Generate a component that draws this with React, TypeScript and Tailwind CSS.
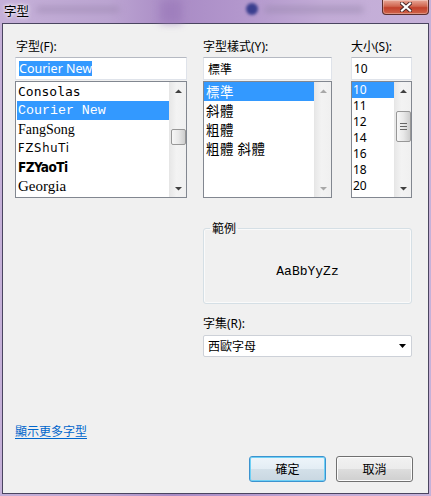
import React from "react";

function Arrow({ dir, color }: { dir: "up" | "down"; color: string }) {
  return (
    <svg width="7" height="4" viewBox="0 0 7 4">
      <path d={dir === "up" ? "M0 4L3.5 0.5L7 4Z" : "M0 0L7 0L3.5 3.5Z"} fill={color} />
    </svg>
  );
}

function ScrollBar({
  thumbClass,
  grip,
  arrowColor,
}: {
  thumbClass?: string;
  grip?: boolean;
  arrowColor: string;
}) {
  return (
    <div className="w-[17px] flex flex-col bg-[linear-gradient(to_right,#e8e8e8,#f3f3f3_40%,#f0f0f0)] border-l border-[#e6e6e6]">
      <div className="h-[17px] flex items-center justify-center">
        <Arrow dir="up" color={arrowColor} />
      </div>
      <div className="flex-1 px-[1px]">
        {thumbClass && (
          <div
            className={
              "w-[15px] rounded-[2px] border border-[#979797] bg-[linear-gradient(to_right,#f7f7f7,#e8e8e8_50%,#cdcdcd)] flex flex-col items-center justify-center gap-[2px] " +
              thumbClass
            }
          >
            {grip && (
              <>
                <div className="w-[7px] h-[1px] bg-[#666]" />
                <div className="w-[7px] h-[1px] bg-[#666]" />
                <div className="w-[7px] h-[1px] bg-[#666]" />
              </>
            )}
          </div>
        )}
      </div>
      <div className="h-[17px] flex items-center justify-center">
        <Arrow dir="down" color={arrowColor} />
      </div>
    </div>
  );
}

const fonts: { name: string; cls: string }[] = [
  { name: "Consolas", cls: "font-['DejaVu_Sans_Mono',monospace] text-[13px]" },
  { name: "Courier New", cls: "font-['Liberation_Mono',monospace] text-[13.3px]" },
  { name: "FangSong", cls: "font-['Liberation_Serif',serif] text-[14px]" },
  { name: "FZShuTi", cls: "font-['DejaVu_Sans',sans-serif] text-[11.5px] tracking-[0.8px]" },
  { name: "FZYaoTi", cls: "font-['DejaVu_Sans_Condensed','DejaVu_Sans',sans-serif] font-bold text-[13.5px] tracking-[-0.6px]" },
  { name: "Georgia", cls: "font-['Liberation_Serif',serif] text-[15px]" },
];

const styles = ["標準", "斜體", "粗體", "粗體 斜體"];
const sizes = ["10", "11", "12", "14", "16", "18", "20"];

const tb =
  "h-[23px] bg-white border border-[#dfe3ea] border-t-[#b5b9c2] flex items-center";

export default function App() {
  return (
    <div className="w-[431px] h-[496px] relative overflow-hidden bg-[linear-gradient(to_right,#c5b0d8,#bca5d2_25%,#a98bc5_40%,#b296cc_55%,#c3acd7_75%,#c6b1d9)] flex flex-col px-[2px] pb-[2px] font-['Noto_Sans','Noto_Sans_CJK_TC',sans-serif] text-[12px] text-black">
      {/* title bar */}
      <div className="h-[23px] relative flex items-start">
        <div className="absolute left-[34px] top-[6px] w-[84px] h-[7px] rounded bg-[#9a86ae] blur-[3px] opacity-50" />
        <div className="absolute left-[158px] top-0 w-[22px] h-[23px] bg-[#9b7aba] blur-[4px] opacity-70" />
        <div className="absolute left-[244px] top-[3px] w-[12px] h-[12px] rounded-full bg-[#3a3e8e] blur-[1.5px]" />
        <div className="absolute left-[262px] top-[6px] w-[100px] h-[7px] rounded bg-[#9585aa] blur-[3px] opacity-50" />
        <div className="relative pl-[2px] pt-[3px] leading-[16px] text-[12.5px] font-['Noto_Sans_CJK_TC',sans-serif] [text-shadow:0_0_5px_#fff,0_0_3px_#fff]">
          字型
        </div>
        <div className="relative ml-auto w-[47px] h-[15px] rounded-b-[4px] border border-t-0 border-[#5b2f2f] bg-[linear-gradient(#e9a898,#d06650_45%,#c2402b_55%,#d0654c)] shadow-[inset_0_0_0_1px_rgba(255,255,255,0.3)] flex items-center justify-center">
          <svg width="12" height="10" viewBox="0 0 12 10">
            <path d="M2 1.5L10 8.5M10 1.5L2 8.5" stroke="#4a2828" strokeWidth="4" strokeLinecap="square" />
            <path d="M2 1.5L10 8.5M10 1.5L2 8.5" stroke="#ffffff" strokeWidth="2.2" strokeLinecap="square" />
          </svg>
        </div>
      </div>

      {/* client */}
      <div className="flex-1 border border-[#4a4560] bg-[#f0f0f0] flex flex-col pl-[12px] pr-[15px] pt-[15px]">
        <div className="flex">
          {/* font column */}
          <div className="w-[172px] flex flex-col">
            <div className="h-[16px] leading-[16px] mb-[2px] pl-[1px]">字型(F):</div>
            <div className={tb + " pl-[3px]"}>
              <span className="bg-[#3399ff] text-white leading-[15px] text-[12.5px]">Courier New</span>
            </div>
            <div className="mt-[1px] h-[117px] border border-[#828790] bg-white flex">
              <div className="flex-1 pt-0 pl-[1px]">
                {fonts.map((f, i) => (
                  <div
                    key={f.name}
                    className={
                      "h-[19px] flex items-center pl-[1px] whitespace-nowrap " +
                      f.cls +
                      (i === 1 ? " bg-[#3399ff] text-white" : "")
                    }
                  >
                    {f.name}
                  </div>
                ))}
              </div>
              <ScrollBar thumbClass="mt-[30px] h-[16px]" arrowColor="#404040" />
            </div>
          </div>

          {/* style column */}
          <div className="ml-[16px] w-[129px] flex flex-col">
            <div className="h-[16px] leading-[16px] mb-[2px]">字型樣式(Y):</div>
            <div className={tb + " pl-[4px] font-['Noto_Sans_CJK_TC',sans-serif] text-[12px]"}>標準</div>
            <div className="mt-[1px] h-[117px] border border-[#828790] bg-white flex">
              <div className="flex-1 pl-0">
                {styles.map((s, i) => (
                  <div
                    key={s}
                    className={
                      "h-[19px] flex items-center pl-[2px] whitespace-pre font-['Noto_Sans_CJK_TC',sans-serif] text-[13.5px] tracking-[0.5px] " +
                      (i === 0 ? "bg-[#3399ff] text-white" : "")
                    }
                  >
                    {s}
                  </div>
                ))}
              </div>
              <ScrollBar arrowColor="#a8a8a8" />
            </div>
          </div>

          {/* size column */}
          <div className="ml-[19px] w-[61px] flex flex-col">
            <div className="h-[16px] leading-[16px] mb-[2px]">大小(S):</div>
            <div className={tb + " pl-[2px]"}>10</div>
            <div className="mt-[1px] h-[117px] border border-[#828790] bg-white flex">
              <div className="flex-1 pl-0">
                {sizes.map((s, i) => (
                  <div
                    key={s}
                    className={
                      "h-[16px] flex items-center pl-[1px] " +
                      (i === 0 ? "bg-[#3399ff] text-white" : "")
                    }
                  >
                    {s}
                  </div>
                ))}
              </div>
              <ScrollBar thumbClass="mt-[12px] h-[31px]" grip arrowColor="#404040" />
            </div>
          </div>
        </div>

        {/* sample + script */}
        <div className="ml-[188px] w-[209px] flex flex-col">
          <fieldset className="mt-[22px] h-[84px] border border-[#d5dfe5] rounded-[3px] shadow-[inset_0_0_0_1px_#fafafa]">
            <legend className="ml-[6px] px-[2px] leading-[16px] font-['Noto_Sans_CJK_TC',sans-serif]">範例</legend>
            <div className="h-[67px] pt-[4px] flex items-center justify-center font-['Liberation_Mono',monospace] text-[13px]">
              AaBbYyZz
            </div>
          </fieldset>
          <div className="mt-[12px] h-[16px] leading-[16px]">字集(R):</div>
          <div className="mt-[3px] h-[22px] bg-white border border-[#cdd1d8] rounded-[2px] flex items-center pl-[4px] pr-[5px]">
            <span className="font-['Noto_Sans_CJK_TC',sans-serif]">西歐字母</span>
            <svg className="ml-auto" width="7" height="4" viewBox="0 0 7 4">
              <path d="M0 0L7 0L3.5 4Z" fill="#000" />
            </svg>
          </div>
        </div>

        <div className="mt-[66px] h-[16px] leading-[16px]">
          <span className="text-[#0066cc] underline underline-offset-[2px] font-['Noto_Sans_CJK_TC',sans-serif]">
            顯示更多字型
          </span>
        </div>

        <div className="mt-[17px] flex justify-end gap-[10px]">
          <div className="w-[77px] h-[26px] rounded-[3px] border border-[#3c93cf] shadow-[inset_0_0_0_1px_#6fd0f5] bg-[linear-gradient(#eef5fa,#e3edf4_50%,#d3e0e9_50%,#c9d7e1)] flex items-center justify-center font-['Noto_Sans_CJK_TC',sans-serif]">
            確定
          </div>
          <div className="w-[77px] h-[26px] rounded-[3px] border border-[#707070] shadow-[inset_0_0_0_1px_#fcfcfc] bg-[linear-gradient(#f2f2f2,#ebebeb_50%,#dddddd_50%,#cfcfcf)] flex items-center justify-center font-['Noto_Sans_CJK_TC',sans-serif]">
            取消
          </div>
        </div>
      </div>
    </div>
  );
}
